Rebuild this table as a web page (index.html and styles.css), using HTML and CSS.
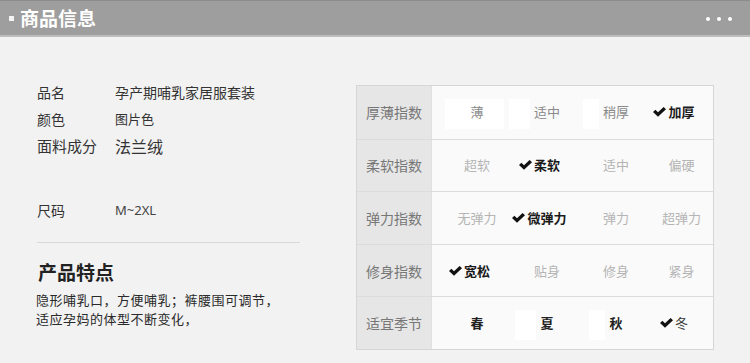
FILE: index.html
```html
<!DOCTYPE html>
<html lang="zh">
<head>
<meta charset="utf-8">
<title>商品信息</title>
<link rel="stylesheet" href="styles.css">
</head>
<body>
<header class="bar">
  <div class="bar-title"><span class="bullet"></span>商品信息</div>
  <div class="dots"><span></span><span></span><span></span></div>
</header>
<main class="main">
  <section class="info">
    <div class="row"><span class="k">品名</span><span class="v">孕产期哺乳家居服套装</span></div>
    <div class="row"><span class="k">颜色</span><span class="v small">图片色</span></div>
    <div class="row big"><span class="k">面料成分</span><span class="v">法兰绒</span></div>
    <div class="row size"><span class="k">尺码</span><span class="v latin">M~2XL</span></div>
    <hr class="rule">
    <h2 class="feat-title">产品特点</h2>
    <p class="feat">隐形哺乳口，方便哺乳；裤腰围可调节，</p>
    <p class="feat">适应孕妈的体型不断变化，</p>
  </section>
  <section class="table">
    <div class="trow">
      <div class="lab">厚薄指数</div>
      <div class="opts dim">
        <span class="o box">薄</span><span class="o box2">适中</span><span class="o box3">稍厚</span><span class="o on">加厚</span>
      </div>
    </div>
    <div class="trow">
      <div class="lab">柔软指数</div>
      <div class="opts light">
        <span class="o">超软</span><span class="o on">柔软</span><span class="o">适中</span><span class="o">偏硬</span>
      </div>
    </div>
    <div class="trow">
      <div class="lab">弹力指数</div>
      <div class="opts light">
        <span class="o">无弹力</span><span class="o on">微弹力</span><span class="o">弹力</span><span class="o">超弹力</span>
      </div>
    </div>
    <div class="trow">
      <div class="lab">修身指数</div>
      <div class="opts light">
        <span class="o on">宽松</span><span class="o">贴身</span><span class="o">修身</span><span class="o">紧身</span>
      </div>
    </div>
    <div class="trow">
      <div class="lab">适宜季节</div>
      <div class="opts dark">
        <span class="o">春</span><span class="o box2">夏</span><span class="o box3">秋</span><span class="o on thin">冬</span>
      </div>
    </div>
  </section>
</main>
</body>
</html>
```
FILE: styles.css
```css
* { box-sizing: border-box; }
html, body { margin: 0; padding: 0; }
body {
  width: 750px;
  height: 363px;
  overflow: hidden;
  background: #f2f2f2;
  font-family: "Noto Sans CJK SC", "Noto Sans", sans-serif;
  color: #333;
}
.bar {
  height: 37px;
  background: #9e9e9e;
  border-top: 1px solid #8c8c8c;
  border-bottom: 2px solid #bdbdbd;
  display: flex;
  align-items: center;
  justify-content: space-between;
  padding: 0 18px 0 9px;
}
.bar-title {
  display: flex;
  align-items: center;
  color: #fff;
  font-size: 19px;
  font-weight: 700;
  line-height: 1;
  margin-top: -1px;
}
.bullet {
  width: 5px;
  height: 5px;
  background: #f4f4f4;
  margin-right: 6px;
  margin-top: 2px;
}
.dots { display: flex; gap: 7px; margin-top: 1px; }
.dots span {
  width: 4px; height: 4px; border-radius: 50%; background: #fff;
}
.main {
  display: flex;
  align-items: flex-start;
  padding-left: 37px;
}
.info {
  width: 263px;
  padding-top: 41px;
}
.row {
  display: flex;
  align-items: center;
  height: 27px;
  font-size: 14px;
  color: #333;
}
.row .k { width: 78px; }
.row .v.small { font-size: 13px; }
.row.big { font-size: 15px; }
.row.big .v { font-size: 16px; }
.row.size { margin-top: 37px; }
.latin { font-family: "Noto Sans", "Open Sans", sans-serif; font-size: 13px; color: #444; }
.rule {
  margin: 19px 0 0;
  border: 0;
  border-top: 1px solid #d9d9d9;
}
.feat-title {
  margin: 16px 0 5px 1px;
  font-size: 19px;
  line-height: 26px;
  font-weight: 700;
  color: #222;
}
.feat {
  margin: 0 0 0 -1px;
  font-size: 13px;
  letter-spacing: 0.5px;
  line-height: 19px;
  color: #2a2a2a;
  white-space: nowrap;
}
.table {
  margin: 48px 0 0 56px;
  width: 358px;
  border: 1px solid #d6d6d6;
  background: #fafafa;
}
.trow {
  display: flex;
  height: 52.6px;
}
.trow + .trow { border-top: 1px solid #dcdcdc; }
.lab {
  width: 75px;
  background: #e6e6e6;
  border-right: 1px solid #e0e0e0;
  display: flex;
  align-items: center;
  justify-content: center;
  font-size: 14px;
  color: #777;
}
.opts {
  flex: 1;
  display: grid;
  grid-template-columns: 70px 70px 68px 1fr;
  padding-left: 10px;
  align-items: center;
  font-size: 13px;
}
.o {
  position: relative;
  z-index: 0;
  justify-self: center;
  line-height: 18px;
}
.dim .o { color: #8a8a8a; }
.light .o { color: #b4b4b4; }
.dark .o { color: #222; font-weight: 700; }
.opts .o.on { color: #1a1a1a; font-weight: 700; }
.dark .o.thin { font-weight: 400; color: #333; }
.o.on::before {
  content: "";
  position: absolute;
  right: 100%;
  top: 50%;
  width: 13px;
  height: 10px;
  margin: -5px 2px 0 0;
  background: url("data:image/svg+xml;utf8,<svg xmlns='http://www.w3.org/2000/svg' viewBox='0 0 13 10'><path d='M0 5 L2.4 2.7 L5 5.2 L10.6 0 L13 2.3 L5 9.8 Z' fill='%23111'/></svg>") no-repeat center / contain;
}
.o.box::after, .o.box2::after, .o.box3::after {
  content: "";
  position: absolute;
  z-index: -1;
  background: #fff;
  top: -4px;
  bottom: -8px;
}
.o.box::after { left: -25px; right: -20px; }
.o.box2::after { left: -25px; right: 100%; margin-right: 4px; }
.o.box3::after { left: -20px; right: 100%; margin-right: 4px; }
```
